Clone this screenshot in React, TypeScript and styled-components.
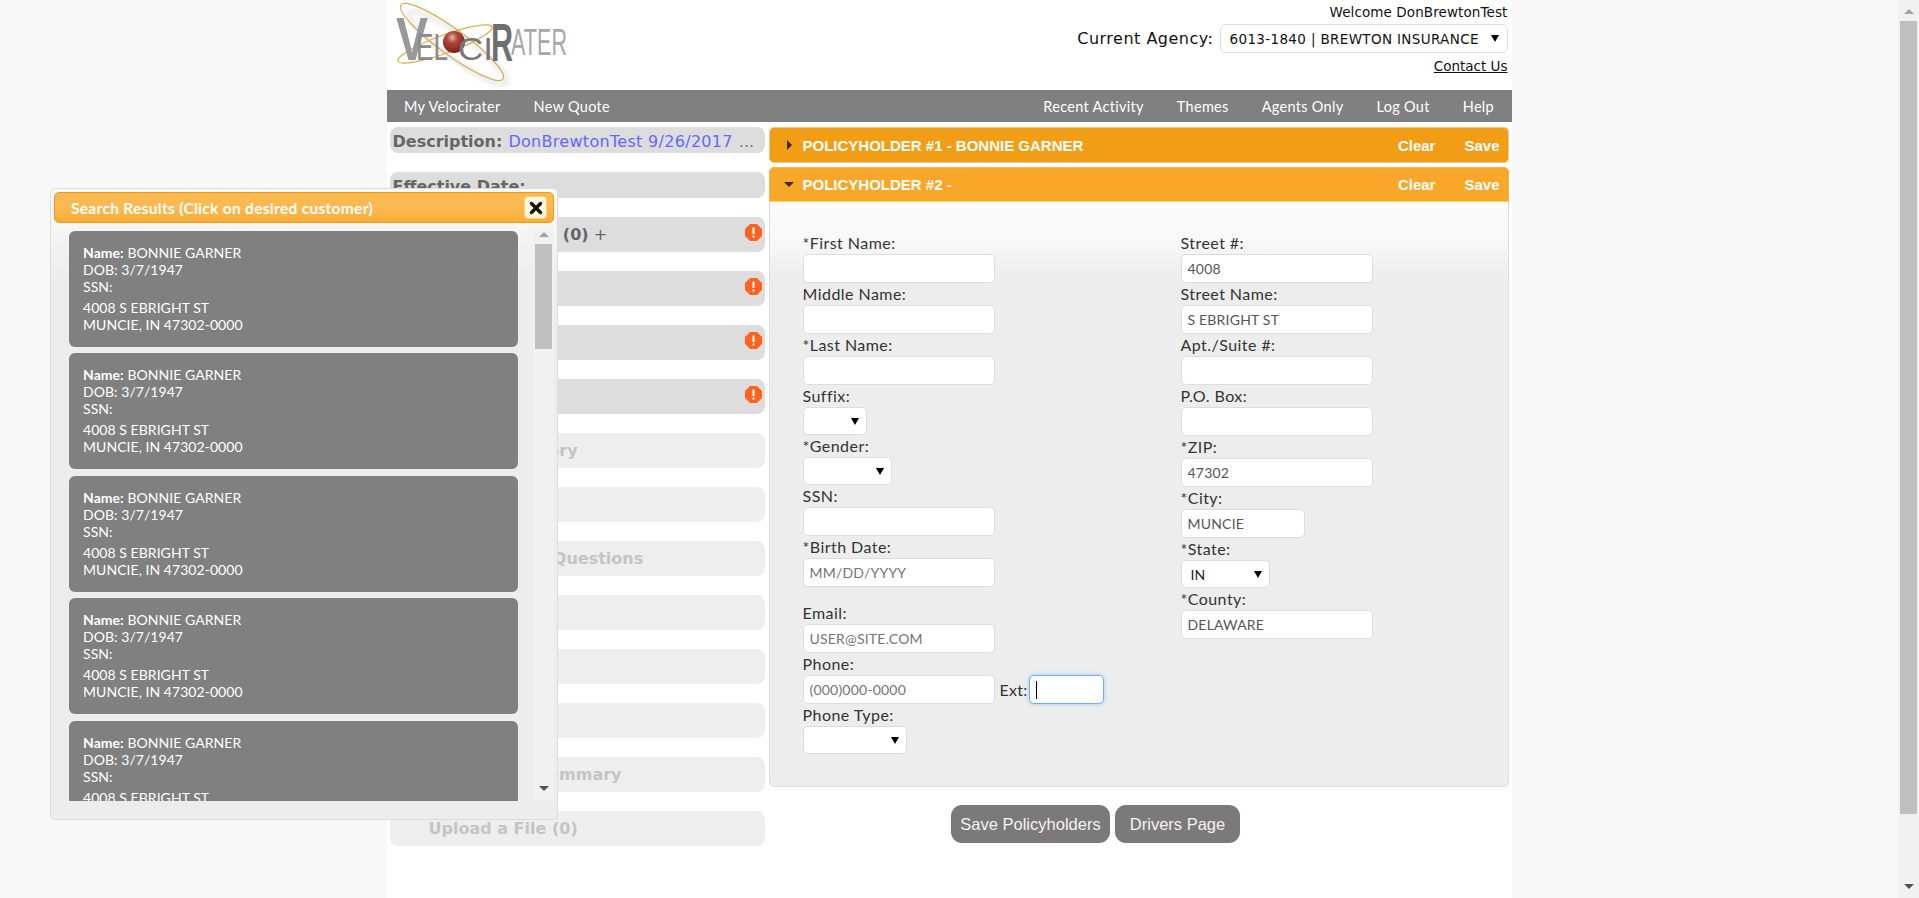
import styled, { createGlobalStyle } from "styled-components";

const GlobalStyle = createGlobalStyle`
  html, body {
    margin: 0;
    height: 100%;
    overflow: hidden;
    background: #f8f8f8;
  }
  body {
    font-family: Lato, "Open Sans", sans-serif;
    font-size: 15px;
    color: #333;
  }
  * { box-sizing: border-box; }
`;

const Screen = styled.div`
  display: flex;
  height: 898px;
  position: relative;
`;

const PageArea = styled.div`
  flex: 1;
  display: flex;
  justify-content: center;
  overflow: hidden;
`;

const Column = styled.div`
  width: 1125px;
  height: 898px;
  background: white;
`;

const Header = styled.header`
  height: 90px;
  display: flex;
  justify-content: space-between;
  padding: 0 4px 0 3px;
`;

const HeaderRight = styled.div`
  display: flex;
  flex-direction: column;
  align-items: flex-end;
  font-family: "DejaVu Sans", sans-serif;
  color: #111;
`;

const Welcome = styled.div`
  font-size: 13.5px;
  letter-spacing: 0.1px;
  line-height: 24px;
  height: 24px;
`;

const AgencyRow = styled.div`
  display: flex;
  align-items: center;
  gap: 6px;
  font-size: 16px;
  letter-spacing: 0.5px;
`;

const AgencySelect = styled.div`
  width: 288px;
  height: 29px;
  background: white;
  border: 1px solid #ddd;
  border-radius: 6px;
  display: flex;
  align-items: center;
  justify-content: space-between;
  padding: 0 8px 0 9px;
  font-size: 13.5px;
  letter-spacing: 0.35px;
  white-space: nowrap;
`;

const ContactLink = styled.a`
  font-size: 13.5px;
  line-height: 18px;
  margin-top: 4px;
  color: #111;
  text-decoration: underline;
`;

const Caret = styled.span`
  width: 0;
  height: 0;
  border-left: 4px solid transparent;
  border-right: 4px solid transparent;
  border-top: 7px solid #000;
`;

const Nav = styled.nav`
  height: 32px;
  background: #808080;
  display: flex;
  justify-content: space-between;
  padding: 0 1px;
`;

const NavGroup = styled.div`
  display: flex;
  align-items: center;
`;

const NavLink = styled.a`
  color: white;
  font-size: 14.5px;
  letter-spacing: 0.3px;
  padding: 0 16.5px;
  white-space: nowrap;
`;

const Content = styled.div`
  display: flex;
  gap: 4px;
  padding: 5px 3px 0;
`;

const Sidebar = styled.aside`
  width: 375px;
  display: flex;
  flex-direction: column;
  gap: 19px;
  font-family: "DejaVu Sans", sans-serif;
  font-size: 16px;
`;

const InfoPill = styled.div`
  height: 26px;
  background: #ddd;
  border-radius: 8px;
  padding: 3px 3px 0;
  display: flex;
  align-items: center;
  gap: 6px;
  white-space: nowrap;
`;

const InfoLabel = styled.b`
  color: #666;
`;

const InfoValue = styled.span`
  color: #6666ff;
  letter-spacing: 0.3px;
`;

const Ellipsis = styled.span`
  color: #777;
`;

const StepPill = styled.div<{ $disabled?: boolean }>`
  height: 35px;
  background: ${(p) => (p.$disabled ? "#eee" : "#ddd")};
  color: ${(p) => (p.$disabled ? "#c4c4c4" : "#666")};
  border-radius: 8px;
  padding: 0 3px 0 39px;
  font-weight: bold;
  display: flex;
  align-items: center;
  justify-content: space-between;
  white-space: nowrap;
`;

const StepPlus = styled.span`
  font-weight: normal;
`;

const BadgeSlot = styled.span`
  display: flex;
  margin-bottom: 5px;
`;

const Main = styled.main`
  width: 740px;
`;

const PanelHeader = styled.div<{ $open?: boolean }>`
  height: ${(p) => (p.$open ? "35px" : "36px")};
  margin-bottom: ${(p) => (p.$open ? "0" : "4px")};
  background: ${(p) => (p.$open ? "#f8a729" : "#f29d16")};
  border: 1px solid ${(p) => (p.$open ? "#f5b550" : "#e8c98f")};
  border-bottom-color: ${(p) => (p.$open ? "#fbd850" : "#e8c98f")};
  border-radius: ${(p) => (p.$open ? "5px 5px 0 0" : "5px")};
  display: flex;
  align-items: center;
  padding: 0 8px 0 14px;
  color: white;
  font-family: "Liberation Sans", Arial, sans-serif;
  font-weight: bold;
  font-size: 15px;
`;

const PanelArrow = styled.span<{ $open?: boolean }>`
  width: 0;
  height: 0;
  ${(p) =>
    p.$open
      ? `margin-right: 9px;
         border-left: 5px solid transparent;
         border-right: 5px solid transparent;
         border-top: 5px solid #3a2a10;`
      : `margin-left: 3px;
         margin-right: 11px;
         border-top: 5px solid transparent;
         border-bottom: 5px solid transparent;
         border-left: 5px solid #3a2a10;`}
`;

const PanelTitle = styled.span`
  flex: 1;
`;

const PanelAction = styled.span`
  margin-left: 29px;
`;

const PanelBody = styled.div`
  height: 585px;
  background: linear-gradient(#fbfbfb 0, #f8f8f8 40px, #ededed 75px);
  border: 1px solid #ddd;
  border-top: none;
  border-radius: 0 0 5px 5px;
  padding: 30px 33px 0;
  display: flex;
`;

const FormColumn = styled.div<{ $width: number }>`
  width: ${(p) => p.$width}px;
  display: flex;
  flex-direction: column;
`;

const Label = styled.label`
  display: block;
  height: 22px;
  line-height: 22px;
  font-size: 16px;
  letter-spacing: 0.45px;
  color: #333;
  white-space: nowrap;
`;

const TextInput = styled.input<{ $width?: number }>`
  display: block;
  width: ${(p) => p.$width ?? 192}px;
  height: 29px;
  border: 1px solid #ddd;
  border-radius: 5px;
  background: white;
  padding: 0 5px 0 6px;
  font: 14px Lato, sans-serif;
  letter-spacing: 0.2px;
  color: #555;
  &::placeholder { color: #757575; opacity: 1; }
`;

const SelectWrap = styled.div<{ $width: number }>`
  position: relative;
  width: ${(p) => p.$width}px;
  height: 28px;
  &::after {
    content: "";
    position: absolute;
    right: 8px;
    top: 11px;
    border-left: 4px solid transparent;
    border-right: 4px solid transparent;
    border-top: 7px solid #000;
  }
`;

const Select = styled.select`
  appearance: none;
  display: block;
  width: 100%;
  height: 100%;
  border: 1px solid #ddd;
  border-radius: 5px;
  background: white;
  padding: 0 9px;
  font: 14px Lato, sans-serif;
  color: #222;
`;

const Spacer = styled.div<{ $h: number }>`
  height: ${(p) => p.$h}px;
`;

const PhoneRow = styled.div`
  display: flex;
  align-items: center;
  height: 29px;
`;

const ExtLabel = styled.span`
  margin: 0 1px 0 5px;
  font-size: 16px;
  letter-spacing: 0.3px;
`;

const ExtField = styled.div`
  width: 75px;
  height: 29px;
  background: white;
  border: 1px solid #6cb0ee;
  border-radius: 5px;
  box-shadow: 0 0 4px #9ecaf3;
  padding-left: 6px;
  display: flex;
  align-items: center;
`;

const TextCaret = styled.span`
  width: 1px;
  height: 18px;
  background: #000;
`;

const Actions = styled.div`
  display: flex;
  justify-content: center;
  gap: 5px;
  margin-top: 18px;
  padding-right: 86px;
`;

const ActionButton = styled.button<{ $width: number }>`
  width: ${(p) => p.$width}px;
  height: 38px;
  border: none;
  border-radius: 11px;
  background: #7b7979;
  color: #f4f4f4;
  font: 16.5px "Liberation Sans", Arial, sans-serif;
`;

const Popup = styled.div`
  position: absolute;
  left: 50px;
  top: 188px;
  width: 508px;
  height: 632px;
  background: linear-gradient(#fbfbfb 0, #f7f7f7 30px, #ededed 90px);
  border: 1px solid #ddd;
  border-radius: 5px;
  padding: 3px;
`;

const PopupTitle = styled.div`
  height: 31px;
  background: linear-gradient(#fbb951 0, #fbb951 50%, #f8ae38 100%);
  border: 1px solid #f09a0e;
  border-radius: 5px;
  display: flex;
  align-items: center;
  justify-content: space-between;
  padding: 0 6px 0 16px;
  color: white;
  font-size: 15.5px;
  font-weight: bold;
  letter-spacing: 0.3px;
`;

const CloseButton = styled.button`
  width: 23px;
  height: 23px;
  padding: 0;
  border: 1px solid #fbd07a;
  border-radius: 4px;
  background: #fff8d8;
  display: flex;
  align-items: center;
  justify-content: center;
`;

const PopupBody = styled.div`
  display: flex;
  justify-content: space-between;
  height: 570px;
  margin-top: 8px;
  padding-left: 15px;
`;

const ResultList = styled.div`
  width: 449px;
  overflow: hidden;
  display: flex;
  flex-direction: column;
  gap: 6.4px;
`;

const ResultCard = styled.div`
  flex: none;
  height: 116px;
  background: #808080;
  border-radius: 6px;
  padding: 13px 14px;
  color: white;
  font-size: 14px;
  letter-spacing: 0.05px;
  line-height: 17px;
`;

const CardAddress = styled.div`
  margin-top: 4px;
`;

const Track = styled.div<{ $bg: string; $height: number }>`
  flex: none;
  width: 21px;
  height: ${(p) => p.$height}px;
  background: ${(p) => p.$bg};
  display: flex;
  flex-direction: column;
  align-items: center;
  justify-content: space-between;
`;

const TrackTop = styled.div`
  width: 100%;
  display: flex;
  flex-direction: column;
  align-items: center;
`;

const ArrowUp = styled.span<{ $top: number }>`
  margin-top: ${(p) => p.$top}px;
  border-left: 5px solid transparent;
  border-right: 5px solid transparent;
  border-bottom: 5px solid #a3a3a3;
`;

const ArrowDown = styled.span`
  margin-bottom: 9px;
  border-left: 5px solid transparent;
  border-right: 5px solid transparent;
  border-top: 5px solid #505050;
`;

const Thumb = styled.div<{ $top: number; $height: number }>`
  width: 17px;
  height: ${(p) => p.$height}px;
  margin-top: ${(p) => p.$top}px;
  background: #bfbfbf;
`;

function ScrollBar(props: { bg: string; height: number; arrowTop: number; thumbGap: number; thumbHeight: number }) {
  return (
    <Track $bg={props.bg} $height={props.height}>
      <TrackTop>
        <ArrowUp $top={props.arrowTop} />
        <Thumb $top={props.thumbGap} $height={props.thumbHeight} />
      </TrackTop>
      <ArrowDown />
    </Track>
  );
}

function Logo() {
  return (
    <svg width="190" height="90" viewBox="0 0 190 90" fontFamily="Liberation Sans, Arial, sans-serif">
      <defs>
        <radialGradient id="ball" cx="42%" cy="30%" r="70%">
          <stop offset="0" stopColor="#e8b5a8" />
          <stop offset="0.35" stopColor="#b0483c" />
          <stop offset="1" stopColor="#7c1f18" />
        </radialGradient>
        <filter id="soft">
          <feGaussianBlur stdDeviation="2.5" />
        </filter>
      </defs>
      <ellipse cx="68" cy="48" rx="60" ry="12" transform="rotate(36 68 48)" fill="none" stroke="#ccc" strokeWidth="2" filter="url(#soft)" />
      <ellipse cx="62" cy="42" rx="63" ry="13" transform="rotate(36 62 42)" fill="none" stroke="#d9ae4e" strokeWidth="1.2" />
      <ellipse cx="55" cy="44" rx="50" ry="9" transform="rotate(-20 55 44)" fill="none" stroke="#d9ae4e" strokeWidth="1.2" />
      <text x="6" y="60" fontSize="62" fontWeight="bold" fill="#999" textLength="32" lengthAdjust="spacingAndGlyphs">V</text>
      <text x="26" y="60" fontSize="36" fill="#8a8a8a" textLength="32" lengthAdjust="spacingAndGlyphs">EL</text>
      <circle cx="64" cy="42" r="11" fill="url(#ball)" />
      <text x="68" y="60" fontSize="32" fill="#777" textLength="35" lengthAdjust="spacingAndGlyphs">CI</text>
      <text x="101" y="61" fontSize="54" fontWeight="bold" fill="#6e6e6e" textLength="22" lengthAdjust="spacingAndGlyphs">R</text>
      <text x="121" y="55" fontSize="37" fill="#a8a8a8" textLength="56" lengthAdjust="spacingAndGlyphs">ATER</text>
    </svg>
  );
}

function WarningBadge() {
  return (
    <svg width="17" height="17" viewBox="0 0 17 17">
      <polygon points="5,0 12,0 17,5 17,12 12,17 5,17 0,12 0,5" fill="#ff6320" />
      <rect x="7.5" y="3.5" width="2" height="6.5" fill="#fff" />
      <rect x="7.5" y="11.5" width="2" height="2" fill="#fff" />
    </svg>
  );
}

const steps = [
  { label: "Policy Holders (0)", plus: true, warn: true },
  { label: "Drivers", warn: true },
  { label: "Vehicles", warn: true },
  { label: "Coverages", warn: true },
  { label: "Accident History", disabled: true },
  { label: "Reports", disabled: true },
  { label: "Underwriting Questions", disabled: true },
  { label: "Notes", disabled: true },
  { label: "Bind", disabled: true },
  { label: "Documents", disabled: true },
  { label: "Application Summary", disabled: true },
  { label: "Upload a File (0)", disabled: true },
];

const results = [1, 2, 3, 4, 5];

function App() {
  return (
    <Screen>
      <GlobalStyle />
      <PageArea>
        <Column>
          <Header>
            <Logo />
            <HeaderRight>
              <Welcome>Welcome DonBrewtonTest</Welcome>
              <AgencyRow>
                Current Agency:
                <AgencySelect>
                  6013-1840 | BREWTON INSURANCE
                  <Caret />
                </AgencySelect>
              </AgencyRow>
              <ContactLink href="#">Contact Us</ContactLink>
            </HeaderRight>
          </Header>
          <Nav>
            <NavGroup>
              <NavLink>My Velocirater</NavLink>
              <NavLink>New Quote</NavLink>
            </NavGroup>
            <NavGroup>
              <NavLink>Recent Activity</NavLink>
              <NavLink>Themes</NavLink>
              <NavLink>Agents Only</NavLink>
              <NavLink>Log Out</NavLink>
              <NavLink>Help</NavLink>
            </NavGroup>
          </Nav>
          <Content>
            <Sidebar>
              <InfoPill>
                <InfoLabel>Description:</InfoLabel>
                <InfoValue>DonBrewtonTest 9/26/2017</InfoValue>
                <Ellipsis>...</Ellipsis>
              </InfoPill>
              <InfoPill>
                <InfoLabel>Effective Date:</InfoLabel>
              </InfoPill>
              {steps.map((s) => (
                <StepPill key={s.label} $disabled={s.disabled}>
                  <span>
                    {s.label}
                    {s.plus && <StepPlus> +</StepPlus>}
                  </span>
                  {s.warn && (
                    <BadgeSlot>
                      <WarningBadge />
                    </BadgeSlot>
                  )}
                </StepPill>
              ))}
            </Sidebar>
            <Main>
              <PanelHeader>
                <PanelArrow />
                <PanelTitle>POLICYHOLDER #1 - BONNIE GARNER</PanelTitle>
                <PanelAction>Clear</PanelAction>
                <PanelAction>Save</PanelAction>
              </PanelHeader>
              <PanelHeader $open>
                <PanelArrow $open />
                <PanelTitle>POLICYHOLDER #2 -</PanelTitle>
                <PanelAction>Clear</PanelAction>
                <PanelAction>Save</PanelAction>
              </PanelHeader>
              <PanelBody>
                <FormColumn $width={378}>
                  <Label>*First Name:</Label>
                  <TextInput readOnly />
                  <Label>Middle Name:</Label>
                  <TextInput readOnly />
                  <Label>*Last Name:</Label>
                  <TextInput readOnly />
                  <Label>Suffix:</Label>
                  <SelectWrap $width={64}>
                    <Select />
                  </SelectWrap>
                  <Label>*Gender:</Label>
                  <SelectWrap $width={89}>
                    <Select />
                  </SelectWrap>
                  <Label>SSN:</Label>
                  <TextInput readOnly />
                  <Label>*Birth Date:</Label>
                  <TextInput readOnly placeholder="MM/DD/YYYY" />
                  <Spacer $h={15} />
                  <Label>Email:</Label>
                  <TextInput readOnly placeholder="USER@SITE.COM" />
                  <Label>Phone:</Label>
                  <PhoneRow>
                    <TextInput readOnly placeholder="(000)000-0000" />
                    <ExtLabel>Ext:</ExtLabel>
                    <ExtField>
                      <TextCaret />
                    </ExtField>
                  </PhoneRow>
                  <Label>Phone Type:</Label>
                  <SelectWrap $width={104}>
                    <Select />
                  </SelectWrap>
                </FormColumn>
                <FormColumn $width={192}>
                  <Label>Street #:</Label>
                  <TextInput readOnly value="4008" />
                  <Label>Street Name:</Label>
                  <TextInput readOnly value="S EBRIGHT ST" />
                  <Label>Apt./Suite #:</Label>
                  <TextInput readOnly />
                  <Label>P.O. Box:</Label>
                  <TextInput readOnly />
                  <Label>*ZIP:</Label>
                  <TextInput readOnly value="47302" />
                  <Label>*City:</Label>
                  <TextInput readOnly value="MUNCIE" $width={124} />
                  <Label>*State:</Label>
                  <SelectWrap $width={89}>
                    <Select defaultValue="IN">
                      <option>IN</option>
                    </Select>
                  </SelectWrap>
                  <Label>*County:</Label>
                  <TextInput readOnly value="DELAWARE" />
                </FormColumn>
              </PanelBody>
              <Actions>
                <ActionButton $width={159}>Save Policyholders</ActionButton>
                <ActionButton $width={125}>Drivers Page</ActionButton>
              </Actions>
            </Main>
          </Content>
        </Column>
      </PageArea>
      <ScrollBar bg="#f1f1f1" height={898} arrowTop={9} thumbGap={7} thumbHeight={793} />

      <Popup>
        <PopupTitle>
          Search Results (Click on desired customer)
          <CloseButton>
            <svg width="14" height="14" viewBox="0 0 14 14">
              <path d="M2.5 2.5 L11.5 11.5 M11.5 2.5 L2.5 11.5" stroke="#111" strokeWidth="3.4" strokeLinecap="round" />
            </svg>
          </CloseButton>
        </PopupTitle>
        <PopupBody>
          <ResultList>
            {results.map((r) => (
              <ResultCard key={r}>
                <b>Name:</b> BONNIE GARNER
                <br />
                DOB: 3/7/1947
                <br />
                SSN:
                <CardAddress>
                  4008 S EBRIGHT ST
                  <br />
                  MUNCIE, IN 47302-0000
                </CardAddress>
              </ResultCard>
            ))}
          </ResultList>
          <ScrollBar bg="#f1f1f1" height={569} arrowTop={1} thumbGap={7} thumbHeight={105} />
        </PopupBody>
      </Popup>
    </Screen>
  );
}

export default App;
